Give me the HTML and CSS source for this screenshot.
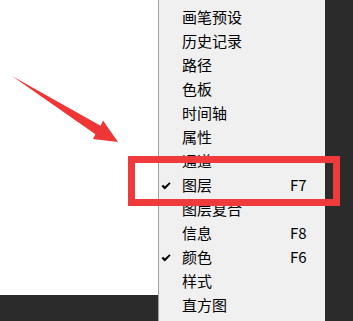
FILE: index.html
```html
<!DOCTYPE html>
<html lang="zh-CN">
<head>
    <meta charset="UTF-8">
    <title>窗口菜单</title>
    <link rel="stylesheet" href="styles.css">
</head>
<body>

<div class="screen">
    <div class="canvas">
        <div class="canvas-doc"></div>
        <div class="canvas-bar"></div>
    </div>

    <ul class="menu">
        <li class="item"><span class="check"></span><span class="label">画笔预设</span><span class="key"></span></li>
        <li class="item"><span class="check"></span><span class="label">历史记录</span><span class="key"></span></li>
        <li class="item"><span class="check"></span><span class="label">路径</span><span class="key"></span></li>
        <li class="item"><span class="check"></span><span class="label">色板</span><span class="key"></span></li>
        <li class="item"><span class="check"></span><span class="label">时间轴</span><span class="key"></span></li>
        <li class="item"><span class="check"></span><span class="label">属性</span><span class="key"></span></li>
        <li class="item"><span class="check"></span><span class="label">通道</span><span class="key"></span></li>
        <li class="item">
            <span class="check">
                <svg width="10" height="8" viewBox="0 0 10 8"><path d="M0.5 4.2 L2.2 2.8 L3.8 4.6 L8.4 0.3 L9.6 1.6 L3.8 7.4 Z" fill="#000"/></svg>
            </span>
            <span class="label">图层</span><span class="key">F7</span>
        </li>
        <li class="item"><span class="check"></span><span class="label">图层复合</span><span class="key"></span></li>
        <li class="item"><span class="check"></span><span class="label">信息</span><span class="key">F8</span></li>
        <li class="item">
            <span class="check">
                <svg width="10" height="8" viewBox="0 0 10 8"><path d="M0.5 4.2 L2.2 2.8 L3.8 4.6 L8.4 0.3 L9.6 1.6 L3.8 7.4 Z" fill="#000"/></svg>
            </span>
            <span class="label">颜色</span><span class="key">F6</span>
        </li>
        <li class="item"><span class="check"></span><span class="label">样式</span><span class="key"></span></li>
        <li class="item"><span class="check"></span><span class="label">直方图</span><span class="key"></span></li>
    </ul>

    <div class="side"></div>

    <!-- annotation drawn over the screenshot -->
    <svg class="arrow" width="353" height="321" viewBox="0 0 353 321">
        <polygon points="12,76 100.6,125.8 103,120.5 118,142 93,139 95.4,134.2" fill="#ee3636"/>
    </svg>
    <div class="highlight"></div>
</div>

</body>
</html>
```

FILE: styles.css
```css
body {
    margin: 0;
    font-family: "Noto Sans CJK SC", "Noto Sans", sans-serif;
}
.screen {
    position: relative;
    display: flex;
    width: 353px;
    height: 321px;
    overflow: hidden;
}
.canvas {
    width: 158px;
    display: flex;
    flex-direction: column;
}
.canvas-doc {
    height: 295px;
    background-color: #ffffff;
}
.canvas-bar {
    flex: 1;
    background-color: #2b2b2b;
}
.menu {
    width: 166px;
    margin: 0;
    padding: 5px 0 0 0;
    list-style: none;
    border-left: 1px solid #a0a0a0;
    background-color: #f0f0f0;
}
.item {
    display: grid;
    grid-template-columns: 23px 108px auto;
    align-items: center;
    height: 24px;
    font-size: 15px;
    line-height: 24px;
    color: #000;
}
.check {
    display: flex;
    align-items: center;
    padding-left: 2px;
    padding-top: 1px;
}
.key {
    font-size: 15px;
}
.side {
    flex: 1;
    background-color: #2b2b2b;
}
.arrow {
    position: absolute;
    left: 0;
    top: 0;
    pointer-events: none;
}
.highlight {
    position: absolute;
    left: 128px;
    top: 156px;
    width: 212px;
    height: 50px;
    box-sizing: border-box;
    border: 7px solid #ef3b3b;
}
```
